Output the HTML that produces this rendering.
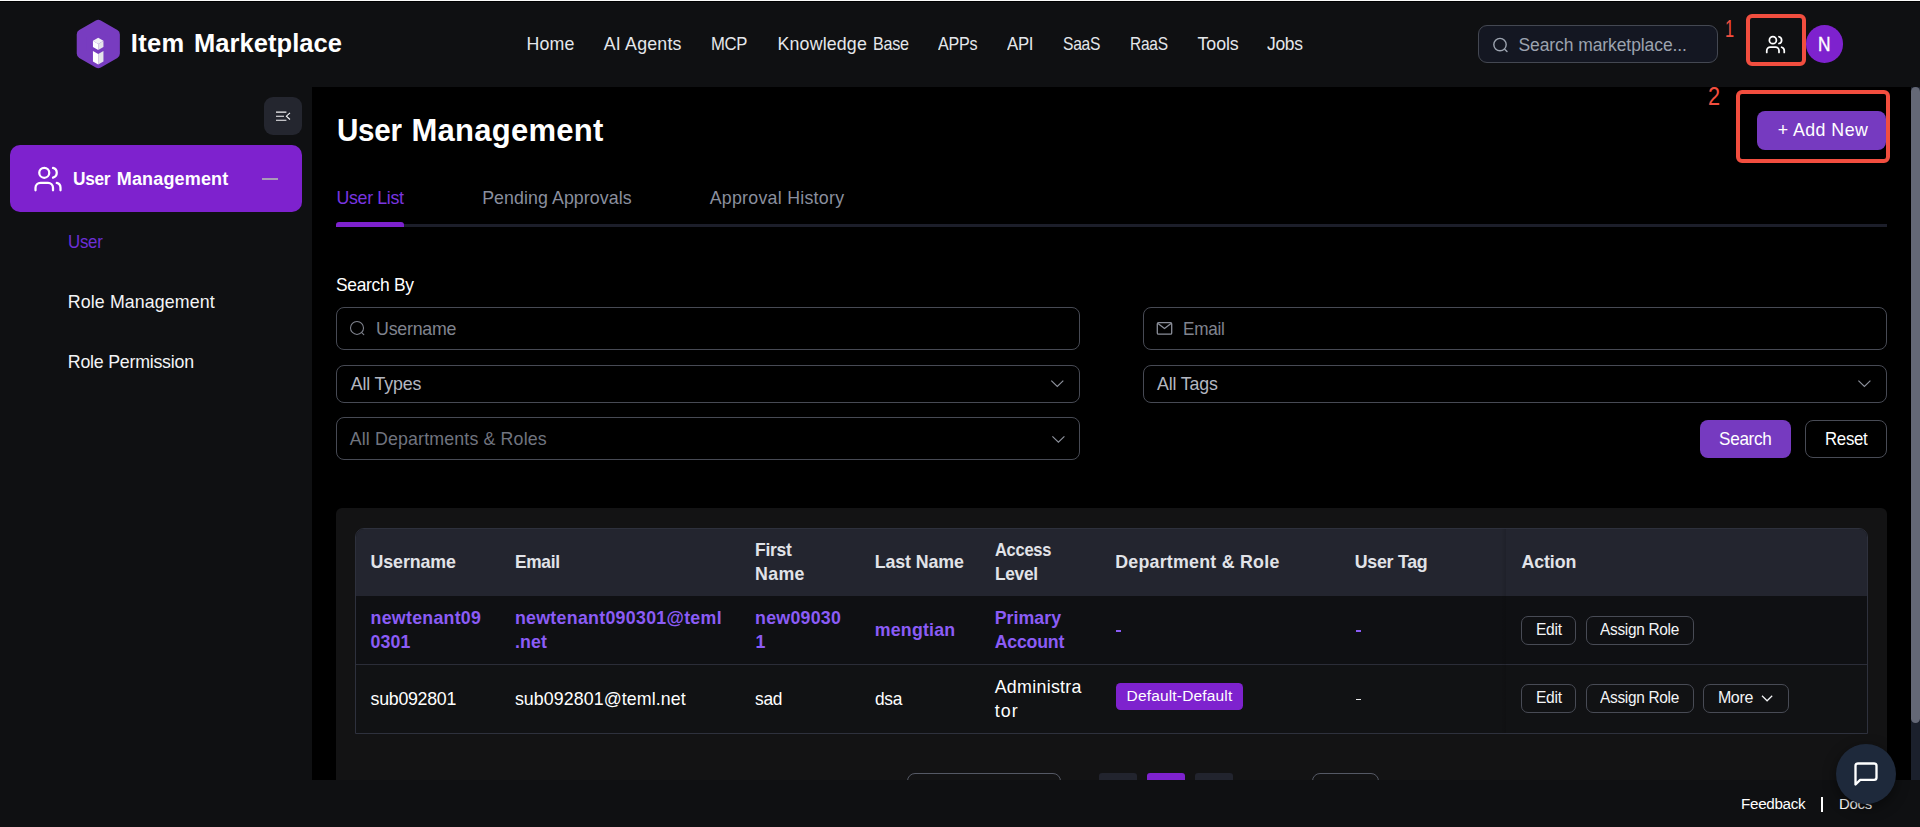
<!DOCTYPE html>
<html lang="en">
<head>
<meta charset="utf-8">
<title>Item Marketplace - User Management</title>
<style>
html,body{margin:0;padding:0;background:#0f1012;}
body{width:1920px;height:827px;overflow:hidden;position:relative;font-family:"Liberation Sans",sans-serif;}
.t{position:absolute;line-height:1;white-space:nowrap;}
.a{position:absolute;box-sizing:border-box;}
svg{position:absolute;overflow:visible;}
.inp{border:1px solid #474a54;border-radius:8px;}
.btn{border:1px solid #484b55;border-radius:7px;}
</style>
</head>
<body>
<!-- top hairline -->
<div class="a" style="left:0;top:0;width:1920px;height:1px;background:#fafafa;"></div>
<div class="a" style="left:0;top:1px;width:1920px;height:1px;background:#000;"></div>

<!-- ================= main content (black) ================= -->
<div class="a" id="content" style="left:312px;top:87px;width:1599px;height:693px;background:#000;overflow:hidden;">
  <!-- coordinates inside are page coords minus (312,87) -->
  <!-- tabs underline -->
  <div class="a" style="left:24px;top:137px;width:1551px;height:3px;background:#1c1e2a;"></div>
  <div class="a" style="left:24px;top:135px;width:68px;height:5px;background:#7e22ce;border-radius:3px 3px 0 0;"></div>

  <!-- Add New button -->
  <div class="a" style="left:1445px;top:24px;width:129px;height:39px;background:#763ac0;border-radius:8px;"></div>
  <!-- annotation box 2 -->
  <div class="a" style="left:1424px;top:3px;width:154px;height:73px;border:4px solid #f24e3f;border-radius:6px;"></div>

  <!-- form -->
  <div class="a inp" style="left:24px;top:220px;width:744px;height:43px;"></div>
  <div class="a inp" style="left:831px;top:220px;width:744px;height:43px;"></div>
  <div class="a inp" style="left:24px;top:278px;width:744px;height:38px;"></div>
  <div class="a inp" style="left:831px;top:278px;width:744px;height:38px;"></div>
  <div class="a inp" style="left:24px;top:330px;width:744px;height:43px;"></div>
  <div class="a" style="left:1388px;top:333px;width:91px;height:38px;background:#763ac0;border-radius:8px;"></div>
  <div class="a btn" style="left:1493px;top:333px;width:82px;height:38px;border-radius:8px;"></div>

  <!-- table card -->
  <div class="a" style="left:24px;top:421px;width:1551px;height:300px;background:#131314;border-radius:6px 6px 0 0;"></div>
  <!-- table -->
  <div class="a" style="left:43px;top:441px;width:1513px;height:206px;border:1px solid #2e313d;border-radius:9px 9px 0 0;background:#0f1013;overflow:hidden;">
    <div class="a" style="left:0;top:0;width:1511px;height:67px;background:#23252f;"></div>
    <div class="a" style="left:0;top:136px;width:1511px;height:70px;background:#111214;"></div>
    <div class="a" style="left:0;top:135px;width:1511px;height:1px;background:#2b2d38;"></div>
    <div class="a" style="left:1145px;top:0;width:5px;height:204px;background:linear-gradient(90deg,rgba(0,0,0,0),rgba(0,0,0,.12));"></div>
  </div>
  <!-- tag -->
  <div class="a" style="left:804px;top:596px;width:127px;height:27px;background:#7e22ce;border-radius:4.5px;"></div>
  <!-- dashes -->
  <div class="a" style="left:804px;top:542.5px;width:5px;height:2px;background:#8b5cf6;"></div>
  <div class="a" style="left:1043.5px;top:542.5px;width:5.5px;height:2px;background:#8b5cf6;"></div>
  <div class="a" style="left:1043.5px;top:611.6px;width:5.5px;height:1.2px;background:#e8e8ea;"></div>
  <!-- action buttons -->
  <div class="a btn" style="left:1209px;top:529px;width:55px;height:29px;"></div>
  <div class="a btn" style="left:1274px;top:529px;width:108px;height:29px;"></div>
  <div class="a btn" style="left:1209px;top:597px;width:55px;height:29px;"></div>
  <div class="a btn" style="left:1274px;top:597px;width:108px;height:29px;"></div>
  <div class="a btn" style="left:1391px;top:597px;width:86px;height:29px;"></div>

  <!-- pagination peeking above footer -->
  <div class="a" style="left:595px;top:686px;width:154px;height:38px;border:1px solid #555965;border-radius:8px;"></div>
  <div class="a" style="left:787px;top:686px;width:38px;height:38px;background:#22242e;border-radius:3px;"></div>
  <div class="a" style="left:835px;top:686px;width:38px;height:38px;background:#7e22ce;border-radius:3px;"></div>
  <div class="a" style="left:883px;top:686px;width:38px;height:38px;background:#22242e;border-radius:3px;"></div>
  <div class="a" style="left:1000px;top:686px;width:67px;height:38px;border:1px solid #555965;border-radius:8px;"></div>
</div>

<!-- scrollbar -->
<div class="a" style="left:1911px;top:87px;width:9px;height:693px;background:#1b202c;"></div>
<div class="a" style="left:1911px;top:87px;width:8.5px;height:636px;background:#646876;border-radius:4.5px;"></div>

<!-- ================= header ================= -->
<svg style="left:70px;top:14px;" width="60" height="60" viewBox="70 14 60 60">
  <polygon points="98.3,24.87 114.87,34.43 114.87,53.57 98.3,63.13 81.73,53.57 81.73,34.43" fill="#783cc0" stroke="#783cc0" stroke-width="10" stroke-linejoin="round"/>
  <polygon points="98.2,37.8 103.45,40.8 98.2,43.9 92.95,40.8" fill="#f1f1f4"/>
  <polygon points="92.95,40.8 98.2,43.9 98.2,49.9 92.95,47" fill="#ffffff"/>
  <polygon points="98.2,43.9 103.45,40.8 103.45,47 98.2,49.9" fill="#e4e4e9"/>
  <polygon points="92.95,50.9 98.2,53.9 98.2,64.4 92.95,61.5" fill="#ffffff"/>
  <polygon points="98.2,53.9 103.45,50.9 103.45,61.5 98.2,64.4" fill="#e4e4e9"/>
</svg>

<div class="a" style="left:1478px;top:25px;width:240px;height:38px;background:#141722;border:1px solid #444852;border-radius:9px;"></div>
<svg style="left:1490px;top:35px;" width="20" height="20" viewBox="1490 35 20 20" fill="none" stroke="#9ca3af" stroke-width="1.4" stroke-linecap="round">
  <circle cx="1500" cy="44.6" r="6.2"/><path d="M1504.9 49.4l2.1 2.1"/>
</svg>
<div class="a" style="left:1746px;top:14px;width:60px;height:52px;border:4px solid #f24e3f;border-radius:6px;"></div>
<svg style="left:1764.9px;top:34.3px;" width="21" height="21" viewBox="0 0 24 24" fill="none" stroke="#fff" stroke-width="2" stroke-linecap="round" stroke-linejoin="round">
  <path d="M16 21v-2a4 4 0 0 0-4-4H6a4 4 0 0 0-4 4v2"/><circle cx="9" cy="7" r="4"/><path d="M22 21v-2a4 4 0 0 0-3-3.87"/><path d="M16 3.13a4 4 0 0 1 0 7.75"/>
</svg>
<div class="a" style="left:1805.5px;top:25.2px;width:37.6px;height:37.6px;background:#7e22ce;border-radius:50%;"></div>

<!-- ================= sidebar ================= -->
<div class="a" style="left:264px;top:97px;width:38px;height:38px;background:#24262f;border-radius:9px;"></div>
<svg style="left:270px;top:104px;" width="26" height="24" viewBox="270 104 26 24" fill="none" stroke="#f3f4f6" stroke-width="1.1" stroke-linecap="butt">
  <path d="M276 112.1h10.4M276 116.2h8M276 120.2h10.4"/>
  <path d="M290 112.9l-3.6 3.3 3.6 3.3" stroke-linejoin="miter"/>
</svg>
<div class="a" style="left:10px;top:145px;width:292px;height:67px;background:#7e22ce;border-radius:10px;"></div>
<svg style="left:32.6px;top:163.9px;" width="30" height="30" viewBox="0 0 24 24" fill="none" stroke="#fff" stroke-width="1.8" stroke-linecap="round" stroke-linejoin="round">
  <path d="M16 21v-2a4 4 0 0 0-4-4H6a4 4 0 0 0-4 4v2"/><circle cx="9" cy="7" r="4"/><path d="M22 21v-2a4 4 0 0 0-3-3.87"/><path d="M16 3.13a4 4 0 0 1 0 7.75"/>
</svg>
<div class="a" style="left:262px;top:178px;width:16px;height:2px;background:#a99bb8;"></div>

<!-- ================= form icons ================= -->
<svg style="left:347px;top:318px;" width="20" height="20" viewBox="347 318 20 20" fill="none" stroke="#80848f" stroke-width="1.05" stroke-linecap="round">
  <circle cx="357" cy="327.9" r="6.5"/><path d="M361.7 332.6l2.1 2.1"/>
</svg>
<svg style="left:1155px;top:320px;" width="20" height="18" viewBox="1155 320 20 18" fill="none" stroke="#8a8e99" stroke-width="1.3" stroke-linejoin="round">
  <rect x="1157.3" y="322.7" width="14.4" height="11.4" rx="1.2"/><path d="M1158 323.6l6.5 5 6.5-5"/>
</svg>
<svg style="left:1050px;top:378px;" width="16" height="12" viewBox="1050 378 16 12" fill="none" stroke="#8e929d" stroke-width="1.15"><path d="M1051.3 380.7l6 5.8 6-5.8"/></svg>
<svg style="left:1857px;top:378px;" width="16" height="12" viewBox="1857 378 16 12" fill="none" stroke="#8e929d" stroke-width="1.15"><path d="M1858.4 380.6l6 5.8 6-5.8"/></svg>
<svg style="left:1051px;top:434px;" width="16" height="12" viewBox="1051 434 16 12" fill="none" stroke="#8e929d" stroke-width="1.15"><path d="M1052.4 436.3l6 5.8 6-5.8"/></svg>
<svg style="left:1760px;top:693px;" width="14" height="10" viewBox="1760 693 14 10" fill="none" stroke="#f3f4f6" stroke-width="1.2"><path d="M1762 695.8l5.1 5 5.1-5"/></svg>

<!-- ================= texts ================= -->
<span class="t" style="left:130.80px;top:31px;font-size:25.5px;color:#ffffff;letter-spacing:0.324px;font-weight:700;">Item</span>
<span class="t" style="left:193.90px;top:31px;font-size:25.5px;color:#ffffff;letter-spacing:0.068px;font-weight:700;">Marketplace</span>
<span class="t" style="left:526.50px;top:36px;font-size:17.8px;color:#e5e7eb;letter-spacing:0.173px;">Home</span>
<span class="t" style="left:603.80px;top:36px;font-size:17.8px;color:#e5e7eb;letter-spacing:0.187px;">AI Agents</span>
<span class="t" style="left:711.00px;top:36px;font-size:17.8px;color:#e5e7eb;letter-spacing:-0.300px;transform:scaleX(0.9371);transform-origin:0 0;">MCP</span>
<span class="t" style="left:777.50px;top:36px;font-size:17.8px;color:#e5e7eb;letter-spacing:0.165px;">Knowledge</span>
<span class="t" style="left:873.00px;top:36px;font-size:17.8px;color:#e5e7eb;letter-spacing:-0.300px;transform:scaleX(0.9074);transform-origin:0 0;">Base</span>
<span class="t" style="left:938.00px;top:36px;font-size:17.8px;color:#e5e7eb;letter-spacing:-0.300px;transform:scaleX(0.9056);transform-origin:0 0;">APPs</span>
<span class="t" style="left:1007.00px;top:36px;font-size:17.8px;color:#e5e7eb;letter-spacing:-0.300px;transform:scaleX(0.9433);transform-origin:0 0;">API</span>
<span class="t" style="left:1062.50px;top:36px;font-size:17.8px;color:#e5e7eb;letter-spacing:-0.300px;transform:scaleX(0.8793);transform-origin:0 0;">SaaS</span>
<span class="t" style="left:1130.00px;top:36px;font-size:17.8px;color:#e5e7eb;letter-spacing:-0.300px;transform:scaleX(0.8710);transform-origin:0 0;">RaaS</span>
<span class="t" style="left:1197.50px;top:36px;font-size:17.8px;color:#e5e7eb;letter-spacing:-0.064px;">Tools</span>
<span class="t" style="left:1267.00px;top:36px;font-size:17.8px;color:#e5e7eb;letter-spacing:-0.300px;transform:scaleX(0.9809);transform-origin:0 0;">Jobs</span>
<span class="t" style="left:1518.40px;top:37px;font-size:17.5px;color:#9ca3af;letter-spacing:-0.081px;">Search marketplace...</span>
<span class="t" style="left:1724.70px;top:17px;font-size:24px;color:#f24e3f;transform:scaleX(0.6820);transform-origin:0 0;">1</span>
<span class="t" style="left:1817.80px;top:35px;font-size:19.5px;color:#ffffff;transform:scaleX(0.8878);transform-origin:0 0;-webkit-text-stroke:0.4px #fff;">N</span>
<span class="t" style="left:72.50px;top:170px;font-size:18px;color:#ffffff;letter-spacing:-0.300px;transform:scaleX(0.9585);transform-origin:0 0;font-weight:700;">User</span>
<span class="t" style="left:116.80px;top:170px;font-size:18px;color:#ffffff;letter-spacing:0.153px;font-weight:700;">Management</span>
<span class="t" style="left:67.80px;top:234px;font-size:17.8px;color:#6d2fd6;letter-spacing:-0.300px;transform:scaleX(0.9486);transform-origin:0 0;">User</span>
<span class="t" style="left:67.80px;top:294px;font-size:17.8px;color:#f3f4f6;letter-spacing:0.118px;">Role Management</span>
<span class="t" style="left:67.80px;top:354px;font-size:17.8px;color:#f3f4f6;letter-spacing:-0.228px;">Role Permission</span>
<span class="t" style="left:336.60px;top:115px;font-size:31px;color:#ffffff;letter-spacing:-0.300px;transform:scaleX(0.9555);transform-origin:0 0;font-weight:700;">User</span>
<span class="t" style="left:411.50px;top:115px;font-size:31px;color:#ffffff;letter-spacing:0.268px;font-weight:700;">Management</span>
<span class="t" style="left:336.60px;top:190px;font-size:17.8px;color:#7a35e0;letter-spacing:-0.354px;">User List</span>
<span class="t" style="left:482.20px;top:190px;font-size:17.8px;color:#8a8f9e;letter-spacing:0.072px;">Pending Approvals</span>
<span class="t" style="left:709.70px;top:190px;font-size:17.8px;color:#8a8f9e;letter-spacing:0.261px;">Approval History</span>
<span class="t" style="left:1708.10px;top:83px;font-size:26.5px;color:#f24e3f;transform:scaleX(0.8212);transform-origin:0 0;">2</span>
<span class="t" style="left:1777.70px;top:122px;font-size:17.8px;color:#ffffff;letter-spacing:0.458px;">+ Add New</span>
<span class="t" style="left:336.20px;top:277px;font-size:17.8px;color:#ffffff;letter-spacing:-0.300px;transform:scaleX(0.9797);transform-origin:0 0;">Search By</span>
<span class="t" style="left:376.10px;top:321px;font-size:17.8px;color:#80848f;letter-spacing:-0.230px;">Username</span>
<span class="t" style="left:1182.80px;top:321px;font-size:17.8px;color:#80848f;letter-spacing:-0.300px;transform:scaleX(0.9652);transform-origin:0 0;">Email</span>
<span class="t" style="left:350.70px;top:376px;font-size:17.8px;color:#b4b7c0;letter-spacing:-0.137px;">All Types</span>
<span class="t" style="left:1157.10px;top:376px;font-size:17.8px;color:#b4b7c0;letter-spacing:-0.158px;">All Tags</span>
<span class="t" style="left:349.70px;top:431px;font-size:17.8px;color:#70747f;letter-spacing:0.150px;">All Departments &amp; Roles</span>
<span class="t" style="left:1718.80px;top:431px;font-size:17.8px;color:#ffffff;letter-spacing:-0.300px;transform:scaleX(0.9636);transform-origin:0 0;">Search</span>
<span class="t" style="left:1825.40px;top:431px;font-size:17.8px;color:#ffffff;letter-spacing:-0.300px;transform:scaleX(0.9448);transform-origin:0 0;">Reset</span>
<span class="t" style="left:370.60px;top:554px;font-size:17.8px;color:#e1e3e8;letter-spacing:-0.112px;font-weight:700;">Username</span>
<span class="t" style="left:514.90px;top:554px;font-size:17.8px;color:#e1e3e8;letter-spacing:-0.300px;transform:scaleX(0.9743);transform-origin:0 0;font-weight:700;">Email</span>
<span class="t" style="left:755.00px;top:542px;font-size:17.8px;color:#e1e3e8;letter-spacing:-0.300px;transform:scaleX(0.9847);transform-origin:0 0;font-weight:700;">First</span>
<span class="t" style="left:755.00px;top:566px;font-size:17.8px;color:#e1e3e8;letter-spacing:0.341px;font-weight:700;">Name</span>
<span class="t" style="left:874.70px;top:554px;font-size:17.8px;color:#e1e3e8;letter-spacing:-0.078px;font-weight:700;">Last Name</span>
<span class="t" style="left:994.70px;top:542px;font-size:17.8px;color:#e1e3e8;letter-spacing:-0.300px;transform:scaleX(0.9268);transform-origin:0 0;font-weight:700;">Access</span>
<span class="t" style="left:994.70px;top:566px;font-size:17.8px;color:#e1e3e8;letter-spacing:-0.300px;transform:scaleX(0.9726);transform-origin:0 0;font-weight:700;">Level</span>
<span class="t" style="left:1115.20px;top:554px;font-size:17.8px;color:#e1e3e8;letter-spacing:0.255px;font-weight:700;">Department &amp; Role</span>
<span class="t" style="left:1354.80px;top:554px;font-size:17.8px;color:#e1e3e8;letter-spacing:-0.278px;font-weight:700;">User Tag</span>
<span class="t" style="left:1521.40px;top:554px;font-size:17.8px;color:#e1e3e8;letter-spacing:-0.075px;font-weight:700;">Action</span>
<span class="t" style="left:370.60px;top:610px;font-size:17.8px;color:#8b5cf6;letter-spacing:0.259px;font-weight:700;">newtenant09</span>
<span class="t" style="left:370.60px;top:634px;font-size:17.8px;color:#8b5cf6;letter-spacing:0.068px;font-weight:700;">0301</span>
<span class="t" style="left:514.90px;top:610px;font-size:17.8px;color:#8b5cf6;letter-spacing:0.291px;font-weight:700;">newtenant090301@teml</span>
<span class="t" style="left:514.90px;top:634px;font-size:17.8px;color:#8b5cf6;letter-spacing:0.117px;font-weight:700;">.net</span>
<span class="t" style="left:755.00px;top:610px;font-size:17.8px;color:#8b5cf6;letter-spacing:0.269px;font-weight:700;">new09030</span>
<span class="t" style="left:755.60px;top:634px;font-size:17.8px;color:#8b5cf6;font-weight:700;">1</span>
<span class="t" style="left:874.70px;top:622px;font-size:17.8px;color:#8b5cf6;letter-spacing:0.211px;font-weight:700;">mengtian</span>
<span class="t" style="left:994.70px;top:610px;font-size:17.8px;color:#8b5cf6;letter-spacing:0.034px;font-weight:700;">Primary</span>
<span class="t" style="left:994.70px;top:634px;font-size:17.8px;color:#8b5cf6;letter-spacing:-0.250px;font-weight:700;">Account</span>
<span class="t" style="left:370.60px;top:691px;font-size:17.8px;color:#ffffff;letter-spacing:-0.288px;">sub092801</span>
<span class="t" style="left:514.90px;top:691px;font-size:17.8px;color:#ffffff;letter-spacing:0.083px;">sub092801@teml.net</span>
<span class="t" style="left:755.00px;top:691px;font-size:17.8px;color:#ffffff;letter-spacing:-0.300px;transform:scaleX(0.9750);transform-origin:0 0;">sad</span>
<span class="t" style="left:874.70px;top:691px;font-size:17.8px;color:#ffffff;letter-spacing:-0.300px;transform:scaleX(0.9750);transform-origin:0 0;">dsa</span>
<span class="t" style="left:994.70px;top:679px;font-size:17.8px;color:#ffffff;letter-spacing:0.313px;">Administra</span>
<span class="t" style="left:994.70px;top:703px;font-size:17.8px;color:#ffffff;letter-spacing:1.164px;">tor</span>
<span class="t" style="left:1126.60px;top:688px;font-size:15.5px;color:#ffffff;letter-spacing:0.158px;">Default-Default</span>
<span class="t" style="left:1535.90px;top:622px;font-size:16px;color:#f3f4f6;letter-spacing:-0.300px;transform:scaleX(0.9750);transform-origin:0 0;">Edit</span>
<span class="t" style="left:1599.80px;top:622px;font-size:16px;color:#f3f4f6;letter-spacing:-0.300px;transform:scaleX(0.9627);transform-origin:0 0;">Assign Role</span>
<span class="t" style="left:1535.90px;top:690px;font-size:16px;color:#f3f4f6;letter-spacing:-0.300px;transform:scaleX(0.9750);transform-origin:0 0;">Edit</span>
<span class="t" style="left:1599.80px;top:690px;font-size:16px;color:#f3f4f6;letter-spacing:-0.300px;transform:scaleX(0.9627);transform-origin:0 0;">Assign Role</span>
<span class="t" style="left:1717.90px;top:690px;font-size:16px;color:#f3f4f6;letter-spacing:-0.352px;">More</span>
<span class="t" style="left:1740.80px;top:796px;font-size:15.5px;color:#ffffff;letter-spacing:-0.300px;transform:scaleX(0.9804);transform-origin:0 0;">Feedback</span>
<span class="t" style="left:1838.70px;top:796px;font-size:15.5px;color:#ffffff;letter-spacing:-0.300px;transform:scaleX(0.9646);transform-origin:0 0;">Docs</span>


<!-- footer separator + chat bubble -->
<div class="a" style="left:1820.7px;top:797px;width:2.2px;height:15px;background:#fff;"></div>
<div class="a" style="left:1836px;top:744px;width:60px;height:60px;background:#1e293b;border-radius:50%;box-shadow:0 4px 14px rgba(0,0,0,.45);"></div>
<svg style="left:1852px;top:760px;" width="28" height="28" viewBox="0 0 24 24" fill="none" stroke="#fff" stroke-width="2" stroke-linecap="round" stroke-linejoin="round">
  <path d="M21 15a2 2 0 0 1-2 2H7l-4 4V5a2 2 0 0 1 2-2h14a2 2 0 0 1 2 2z"/>
</svg>
</body>
</html>
